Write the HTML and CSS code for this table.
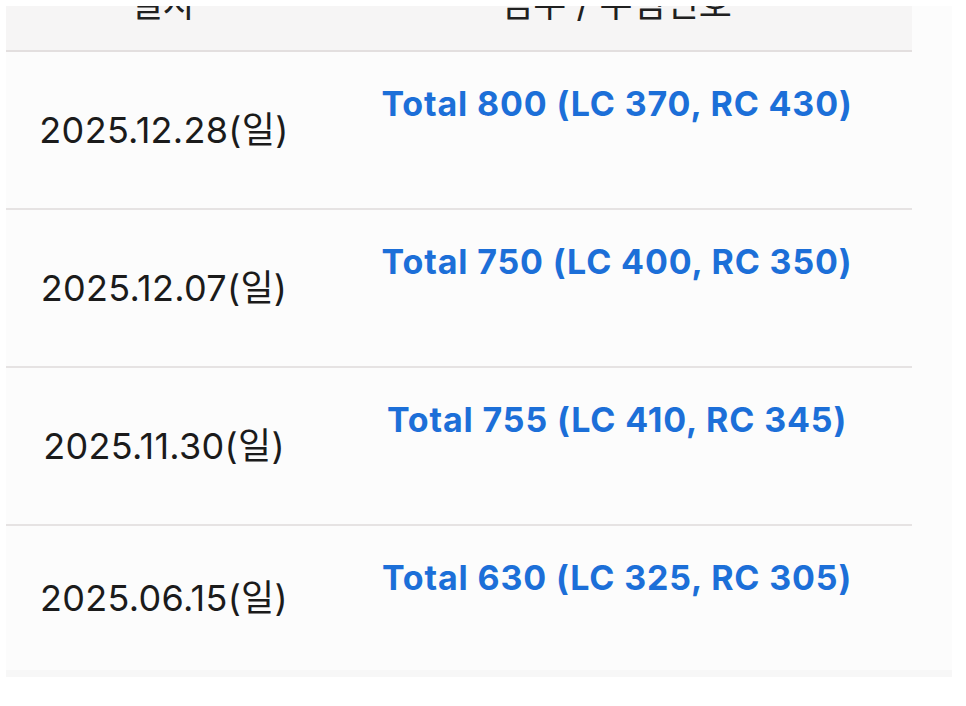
FILE: index.html
```html
<!DOCTYPE html>
<html lang="ko">
<head>
<meta charset="utf-8">
<title>점수 목록</title>
<link rel="stylesheet" href="styles.css">
</head>
<body>
<div class="panel">
  <div class="table">
    <div class="thead">
      <div class="th"><span class="th-text">일자</span></div>
      <div class="th"><span class="th-text">점수 / 수험번호</span></div>
    </div>
    <div class="row">
      <div class="date">2025.12.28(일)</div>
      <div class="score">Total 800 (LC 370, RC 430)</div>
    </div>
    <div class="row">
      <div class="date">2025.12.07(일)</div>
      <div class="score">Total 750 (LC 400, RC 350)</div>
    </div>
    <div class="row">
      <div class="date">2025.11.30(일)</div>
      <div class="score">Total 755 (LC 410, RC 345)</div>
    </div>
    <div class="row row-last">
      <div class="date">2025.06.15(일)</div>
      <div class="score">Total 630 (LC 325, RC 305)</div>
    </div>
  </div>
  <div class="panel-foot"></div>
</div>
</body>
</html>
```
FILE: styles.css
```css
html, body {
  margin: 0;
  padding: 0;
  background: #ffffff;
}

body {
  font-family: Inter, "Noto Sans CJK KR", sans-serif;
  color: #1b1b1b;
  padding: 6px 14px 0 6px;
}

.panel {
  width: 946px;
  background: #fcfcfc;
}

.table {
  width: 906px;
}

.thead {
  display: grid;
  grid-template-columns: 314px 1fr;
  height: 44px;
  background: #f6f5f5;
  border-bottom: 2px solid #e3dfdf;
  overflow: hidden;
}

.th {
  text-align: center;
  overflow: hidden;
}

.th-text {
  display: block;
  margin-top: -20px;
  font-size: 36px;
  line-height: 36px;
  color: #202020;
}

.row {
  display: grid;
  grid-template-columns: 314px 1fr;
  height: 156px;
  border-bottom: 2px solid #e6e3e3;
}

.row-last {
  height: 144px;
  border-bottom: none;
}

.date {
  align-self: center;
  text-align: center;
  font-size: 36px;
  line-height: 44px;
  padding-left: 2px;
  letter-spacing: 0.3px;
}

.score {
  text-align: center;
  padding-top: 32px;
  padding-left: 2px;
  font-size: 34px;
  line-height: 40px;
  font-weight: 700;
  color: #1c6fd8;
  letter-spacing: 0.85px;
}

.panel-foot {
  height: 7px;
  background: #f7f7f7;
}
```
